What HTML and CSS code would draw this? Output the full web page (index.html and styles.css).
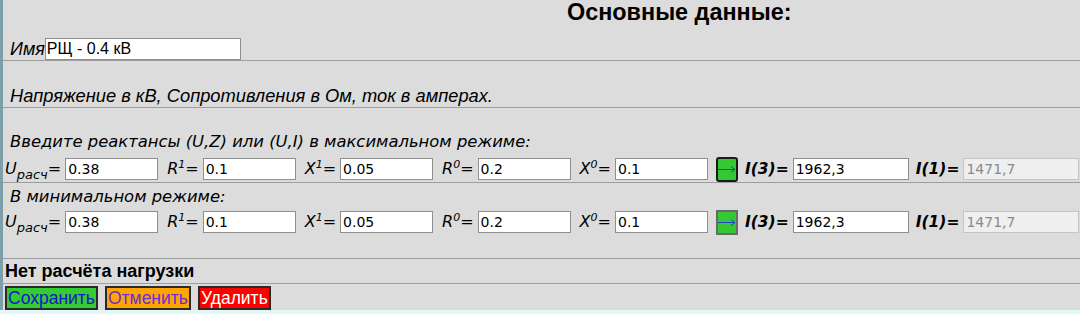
FILE: index.html
```html
<!DOCTYPE html>
<html lang="ru">
<head>
<meta charset="utf-8">
<title>Основные данные</title>
<link rel="stylesheet" href="styles.css">
</head>
<body>
<div class="panel">
  <section class="sec sec-head">
    <div class="title">Основные данные:</div>
    <div class="name-row"><span class="lbl-name">Имя</span><input class="in in-name" value="РЩ - 0.4 кВ"></div>
  </section>
  <section class="sec sec-units">
    <div class="note">Напряжение в кВ, Сопротивления в Ом, ток в амперах.</div>
  </section>
  <section class="sec sec-max">
    <div class="note2">Введите реактансы (U,Z) или (U,I) в максимальном режиме:</div>
    <div class="row">
      <span class="lbl lbl-u">U<sub>расч</sub>=</span><input class="in in-num" value="0.38">
      <span class="lbl">R<sup>1</sup>=</span><input class="in in-num" value="0.1">
      <span class="lbl">X<sup>1</sup>=</span><input class="in in-num" value="0.05">
      <span class="lbl">R<sup>0</sup>=</span><input class="in in-num" value="0.2">
      <span class="lbl">X<sup>0</sup>=</span><input class="in in-num" value="0.1">
      <button class="go go-active"><svg width="18" height="10" viewBox="0 0 18 10"><path d="M0 5.5H16.5M13 2.5L17 5.5L13 8.5" fill="none" stroke="#2244cc" stroke-width="1"/></svg></button>
      <span class="lbl-b">I(3)=</span><input class="in in-res" value="1962,3">
      <span class="lbl-b">I(1)=</span><input class="in in-res in-dis" value="1471,7" disabled>
    </div>
  </section>
  <section class="sec sec-min">
    <div class="note2 note2-min">В минимальном режиме:</div>
    <div class="row">
      <span class="lbl lbl-u">U<sub>расч</sub>=</span><input class="in in-num" value="0.38">
      <span class="lbl">R<sup>1</sup>=</span><input class="in in-num" value="0.1">
      <span class="lbl">X<sup>1</sup>=</span><input class="in in-num" value="0.05">
      <span class="lbl">R<sup>0</sup>=</span><input class="in in-num" value="0.2">
      <span class="lbl">X<sup>0</sup>=</span><input class="in in-num" value="0.1">
      <button class="go"><svg width="18" height="10" viewBox="0 0 18 10"><path d="M0 5.5H16.5M13 2.5L17 5.5L13 8.5" fill="none" stroke="#2244cc" stroke-width="1"/></svg></button>
      <span class="lbl-b">I(3)=</span><input class="in in-res" value="1962,3">
      <span class="lbl-b">I(1)=</span><input class="in in-res in-dis" value="1471,7" disabled>
    </div>
  </section>
  <section class="sec sec-load">
    <div class="load">Нет расчёта нагрузки</div>
  </section>
  <section class="sec sec-btns">
    <button class="btn btn-save">Сохранить</button>
    <button class="btn btn-cancel">Отменить</button>
    <button class="btn btn-del">Удалить</button>
  </section>
</div>
</body>
</html>
```
FILE: styles.css
```css
* { box-sizing: border-box; }
html, body { margin: 0; padding: 0; }
body {
  background: #e2f8f7;
  width: 1080px;
  height: 314px;
  overflow: hidden;
  font-family: "Liberation Sans", Arial, sans-serif;
  color: #000;
}
.panel {
  background: #dcdcdc;
  border-left: 3px solid #7d9fa9;
  padding-left: 2px;
}
.sec {
  border-bottom: 1px solid #9d9d9d;
  margin-left: -2px;
  padding-left: 2px;
}
.sec-head {
  height: 61px;
  display: flex;
  flex-direction: column;
  justify-content: space-between;
}
.title {
  font-weight: bold;
  font-size: 23.4px;
  line-height: 25px;
  padding-left: 562px;
}
.name-row {
  display: flex;
  align-items: center;
  padding-left: 5px;
  height: 22px;
}
.lbl-name {
  font-style: italic;
  font-size: 18px;
  line-height: 22px;
}
.in {
  height: 22px;
  border: 1px solid #8f8f8f;
  background: #fff;
  padding: 0 2px;
  margin: 0;
  font-family: "DejaVu Sans", Verdana, sans-serif;
  font-size: 14px;
  color: #000;
  outline: none;
}
.in-name {
  width: 196px;
  padding: 0 1px;
  font-family: "Liberation Sans", Arial, sans-serif;
  font-size: 16px;
}
.sec-units {
  height: 47px;
  padding-top: 24px;
}
.note {
  font-style: italic;
  font-size: 18.3px;
  line-height: 21px;
  padding-left: 5px;
}
.sec-max {
  height: 75px;
  padding-top: 24px;
}
.note2 {
  font-family: "DejaVu Sans", Verdana, sans-serif;
  font-style: italic;
  font-size: 16.4px;
  line-height: 19px;
  padding-left: 5px;
  margin-bottom: 6px;
}
.sec-min {
  height: 76px;
  padding-top: 4px;
}
.note2-min { margin-bottom: 4px; }
.row {
  display: flex;
  align-items: center;
  height: 24px;
}
.lbl {
  font-family: "DejaVu Sans", Verdana, sans-serif;
  font-style: italic;
  font-size: 16px;
  line-height: 22px;
  margin-left: 9px;
  margin-right: 4px;
  white-space: nowrap;
}
.lbl-u { margin-left: 0; margin-right: 4px; }
.lbl sub {
  font-size: 13px;
  vertical-align: -5px;
  line-height: 0;
}
.lbl sup {
  font-size: 11px;
  vertical-align: 6px;
  line-height: 0;
}
.in-num { width: 93px; }
.go {
  width: 22px;
  height: 25px;
  margin: 0 0 0 8px;
  padding: 0;
  background: #34c934;
  border: 2px solid #6a6a6a;
  display: flex;
  align-items: center;
  justify-content: center;
}
.go-active {
  border-color: #1b1b1b;
  border-radius: 3px;
}
.lbl-b {
  font-family: "DejaVu Sans", Verdana, sans-serif;
  font-weight: bold;
  font-style: italic;
  font-size: 15.5px;
  margin-left: 7px;
  margin-right: 4px;
  white-space: nowrap;
}
.in-res { width: 116px; }
.in-dis {
  background: #efefef;
  border-color: #c4c4c4;
  color: #8a8a8a;
}
.sec-load {
  height: 25px;
  padding-top: 2px;
}
.load {
  font-weight: bold;
  font-size: 18px;
  line-height: 21px;
}
.sec-btns {
  height: 26px;
  padding-top: 2px;
  border-bottom: none;
  display: flex;
  gap: 7px;
}
.btn {
  height: 24px;
  margin: 0;
  padding: 0 1px;
  border: 2px solid #2a2a2a;
  font-family: "Liberation Sans", Arial, sans-serif;
  font-size: 17.5px;
  line-height: 20px;
}
.btn-save { background: #33cc33; color: #1515c8; }
.btn-cancel { background: #ffa500; color: #6a2fd0; }
.btn-del { background: #ff0000; color: #fff; }
```
